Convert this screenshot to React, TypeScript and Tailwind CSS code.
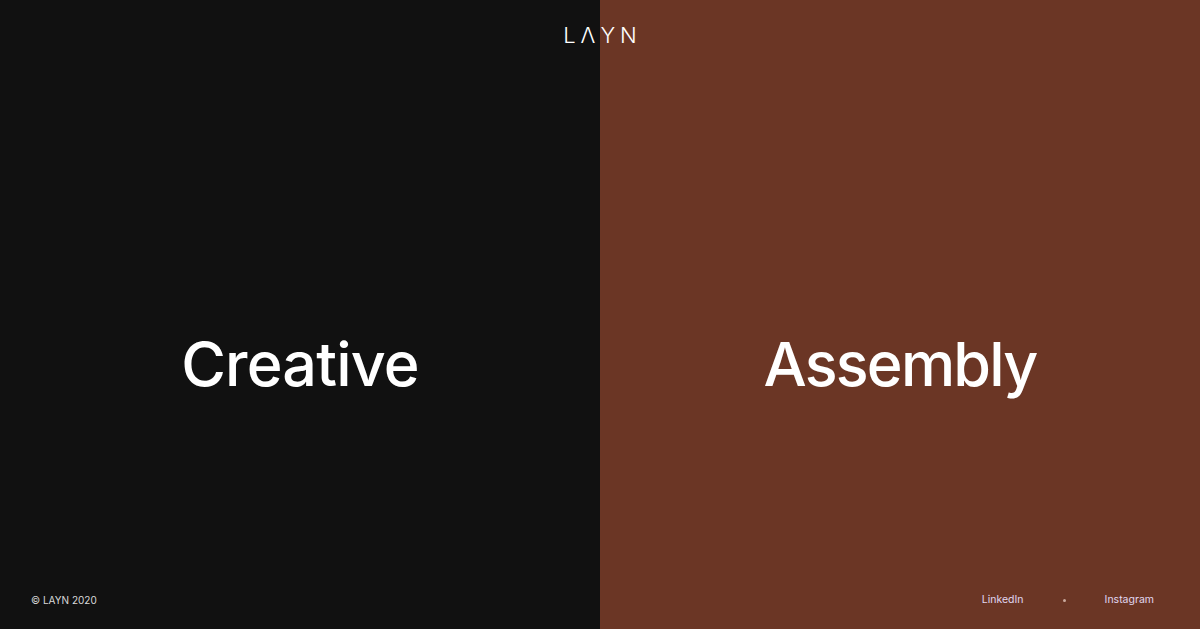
export default function App() {
  return (
    <div className="relative flex h-[629px] w-full overflow-hidden font-['Inter',sans-serif] text-white">
      <div className="absolute left-0 right-0 top-[24px] flex justify-center">
        <span className="pl-[5px] text-[22px] font-light leading-none tracking-[5px]">LΛYN</span>
      </div>

      <section className="flex flex-1 flex-col bg-[#111111] pt-[137px]">
        <div className="flex flex-1 items-center justify-center">
          <h1 className="text-[61px] font-medium leading-none tracking-[-0.8px]">Creative</h1>
        </div>
        <footer className="flex h-[38px] items-start px-[31px] pt-[3px] text-[10px] leading-[12px] text-[#d9d9d9]">
          © LAYN 2020
        </footer>
      </section>

      <section className="flex flex-1 flex-col bg-[#6b3625] pt-[137px]">
        <div className="flex flex-1 items-center justify-center">
          <h1 className="text-[61px] font-medium leading-none tracking-[-1.8px]">Assembly</h1>
        </div>
        <footer className="flex h-[38px] items-start justify-end gap-[39px] px-[46px] pt-[3px] text-[10.5px] leading-[12px] text-[#e0d6f0]">
          <a href="#">LinkedIn</a>
          <span className="mt-[5px] h-[3px] w-[3px] rounded-full bg-[#c9a99d]" />
          <a href="#">Instagram</a>
        </footer>
      </section>
    </div>
  );
}
